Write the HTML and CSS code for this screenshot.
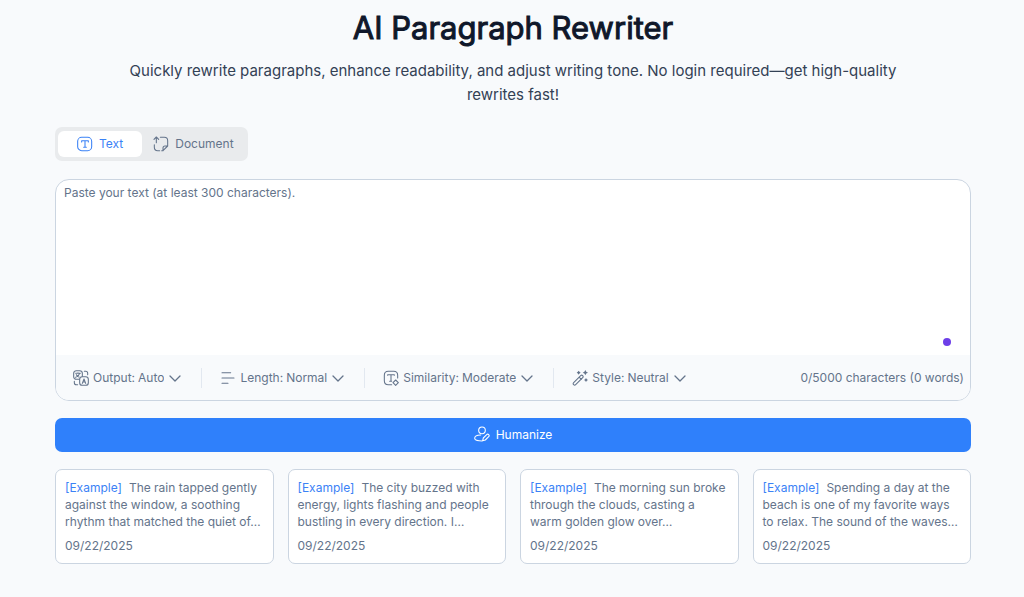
FILE: index.html
```html
<!DOCTYPE html>
<html lang="en">
<head>
<meta charset="UTF-8">
<meta name="viewport" content="width=device-width, initial-scale=1">
<title>AI Paragraph Rewriter</title>
<link rel="stylesheet" href="styles.css">
</head>
<body>
<main class="page">
	<header class="intro">
		<h1>AI Paragraph Rewriter</h1>
		<p>Quickly rewrite paragraphs, enhance readability, and adjust writing tone. No login required—get high-quality rewrites fast!</p>
	</header>

	<div class="tabs" role="tablist">
		<button class="tab active" type="button" role="tab" aria-selected="true">
			<svg class="icon" viewBox="0 0 24 24"><rect x="1" y="2" width="21" height="20" rx="6"/><path d="M7 9V7h10v2M12 7v10M10 17h4"/></svg>
			Text
		</button>
		<button class="tab" type="button" role="tab" aria-selected="false">
			<svg class="icon" viewBox="0 0 24 24"><path d="M5 10V1.500M1.500 5L5 1.500 8.500 5M11 2h6c3.500 0 5 1.500 5 5v8l-7 7h-2M22 15h-4c-2 0-3 1-3 3v4M2 13v4c0 3.500 1.500 5 5 5h3"/></svg>
			Document
		</button>
	</div>

	<form class="rewriter">
		<div class="editor">
			<textarea class="editor-text" aria-label="Your text" placeholder="Paste your text (at least 300 characters)."></textarea>
			<span class="dot"></span>
			<div class="toolbar">
				<div class="option">
					<svg class="icon" viewBox="0 0 24 24"><rect x="1" y="1" width="13" height="13" rx="4"/><rect x="10" y="10" width="13" height="13" rx="4" class="cover"/><path d="M4 5h7M7.500 4v1M10 5c-1 3-3 5-6 6M5 7c1 2 3 3 4 3.500M14 20l2.500-6.500L19 20M15 18h3M17 2h2c2 0 3 1 3 3v2M7 22H5c-2 0-3-1-3-3v-2"/></svg>
					<label for="output">Output:</label>
					<select id="output"><option>Auto</option><option>English</option></select>
					<svg class="chevron" viewBox="0 0 12 12"><path d="M1 4l5 5 5-5"/></svg>
				</div>
				<div class="option">
					<svg class="icon" viewBox="0 0 24 24"><path d="M3 4h13M3 12h18M3 20h9"/></svg>
					<label for="length">Length:</label>
					<select id="length"><option>Normal</option><option>Shorter</option><option>Longer</option></select>
					<svg class="chevron" viewBox="0 0 12 12"><path d="M1 4l5 5 5-5"/></svg>
				</div>
				<div class="option">
					<svg class="icon" viewBox="0 0 24 24"><path d="M13 22H8c-4 0-6-2-6-6V8c0-4 2-6 6-6h8c4 0 6 2 6 6v4M7 8V7h10v1M12 7v10M10 17h3M19 15l4 4-4 4-4-4z"/></svg>
					<label for="similarity">Similarity:</label>
					<select id="similarity"><option>Moderate</option><option>Low</option><option>High</option></select>
					<svg class="chevron" viewBox="0 0 12 12"><path d="M1 4l5 5 5-5"/></svg>
				</div>
				<div class="option">
					<svg class="icon" viewBox="0 0 24 24"><path d="M2.500 19L13 8.500c1-1 2-1 3 0s1 2 0 3L5.500 22c-1 1-2 1-3 0s-1-2 0-3zM11 11l3 3"/><path class="solid" d="M10 1l1.200 1.800L13 4l-1.800 1.200L10 7 8.800 5.200 7 4l1.800-1.200zM20 0l1.400 2.600L24 4l-2.600 1.400L20 8l-1.400-2.600L16 4l2.600-1.400zM21 12l1.200 1.800L24 15l-1.800 1.200L21 18l-1.200-1.800L18 15l1.800-1.200z"/></svg>
					<label for="style">Style:</label>
					<select id="style"><option>Neutral</option><option>Formal</option><option>Casual</option></select>
					<svg class="chevron" viewBox="0 0 12 12"><path d="M1 4l5 5 5-5"/></svg>
				</div>
				<span class="counter">0/5000 characters (0 words)</span>
			</div>
		</div>
		<button class="submit" type="button">
			<svg class="icon" viewBox="0 0 24 24"><circle cx="12" cy="6.500" r="5"/><path d="M12 22.500c-5 0-11-.500-11-4 0-3 4-5 9-5M22 13c1 1 1 2 0 3l-5 5-4 1 1-4 5-5c1-1 2-1 3 0z"/></svg>
			Humanize
		</button>
	</form>

	<section class="examples">
		<article class="card">
			<p><a href="#">[Example]</a>The rain tapped gently against the window, a soothing rhythm that matched the quiet of…</p>
			<time datetime="2025-09-22">09/22/2025</time>
		</article>
		<article class="card">
			<p><a href="#">[Example]</a>The city buzzed with energy, lights flashing and people bustling in every direction. I…</p>
			<time datetime="2025-09-22">09/22/2025</time>
		</article>
		<article class="card">
			<p><a href="#">[Example]</a>The morning sun broke through the clouds, casting a warm golden glow over…</p>
			<time datetime="2025-09-22">09/22/2025</time>
		</article>
		<article class="card">
			<p><a href="#">[Example]</a>Spending a day at the beach is one of my favorite ways to relax. The sound of the waves…</p>
			<time datetime="2025-09-22">09/22/2025</time>
		</article>
	</section>
</main>
</body>
</html>
```

FILE: styles.css
```css
* { box-sizing: border-box; }
body { margin: 0; background: #f8fafc; color: #64748b; font-family: Inter, "Liberation Sans", sans-serif; font-size: 12px; line-height: 17px; font-optical-sizing: none; }
button, select, textarea { font: inherit; color: inherit; }

.page { padding: 8px 53px 32px 55px; }

.intro { text-align: center; }
.intro h1 { margin: 0; color: #0f172a; font-size: 31px; font-weight: 400; line-height: 40px; -webkit-text-stroke: 1px #0f172a; }
.intro p { max-width: 800px; margin: 11px auto 20px; color: #334155; font-size: 15px; line-height: 24px; }

.icon { width: 16px; height: 16px; flex: none; fill: none; stroke: currentColor; stroke-width: 1.6; stroke-linecap: round; stroke-linejoin: round; }
.icon .cover { fill: #f8fafc; }
.icon .solid { fill: currentColor; stroke: none; }
.chevron { width: 12px; height: 12px; fill: none; stroke: currentColor; stroke-width: 1.3; stroke-linecap: round; stroke-linejoin: round; }

.tabs { display: inline-flex; padding: 4px 3px; border-radius: 7px; background: #e9ebed; }
.tab { display: flex; align-items: center; gap: 6px; height: 26px; padding: 0 11px 1px; border: 0; border-radius: 6px; background: none; }
.tab.active { padding: 0 19px 1px; background: #fff; color: #3b82f6; }

.rewriter { margin: 18px 0 17px; }
.editor { position: relative; overflow: hidden; border: 1px solid #cbd5e1; border-radius: 14px; background: #fff; }
.editor-text { display: block; width: 100%; height: 175px; padding: 4px 8px; border: 0; outline: 0; background: none; resize: none; }
.editor-text::placeholder { color: #64748b; }
.dot { position: absolute; right: 19px; bottom: 54px; width: 8px; height: 8px; border-radius: 50%; background: #6d3fe8; }

.toolbar { display: flex; align-items: center; height: 45px; padding: 0 6px 0 17px; background: #f8fafc; }
.option { display: flex; align-items: center; gap: 3px; height: 20px; padding-right: 20px; }
.option + .option { padding-left: 18px; border-left: 1px solid #e2e8f0; }
.option .icon { margin-right: 1px; }
.option select { appearance: none; field-sizing: content; padding: 0; border: 0; background: none; }
.option .chevron { margin-left: 2px; }
.counter { margin-left: auto; white-space: nowrap; }

.submit { display: flex; align-items: center; justify-content: center; gap: 6px; width: 100%; height: 34px; margin-top: 17px; padding: 0 0 2px; border: 0; border-radius: 7px; background: #2f80fb; color: #fff; }

.examples { display: grid; grid-template-columns: repeat(4, 1fr); gap: 14px; }
.card { padding: 9px; border: 1px solid #cbd5e1; border-radius: 7px; background: #fff; }
.card p { margin: 0 0 7px; }
.card a { margin-right: 7px; color: #3b82f6; text-decoration: none; }
.card time { display: block; }
```
